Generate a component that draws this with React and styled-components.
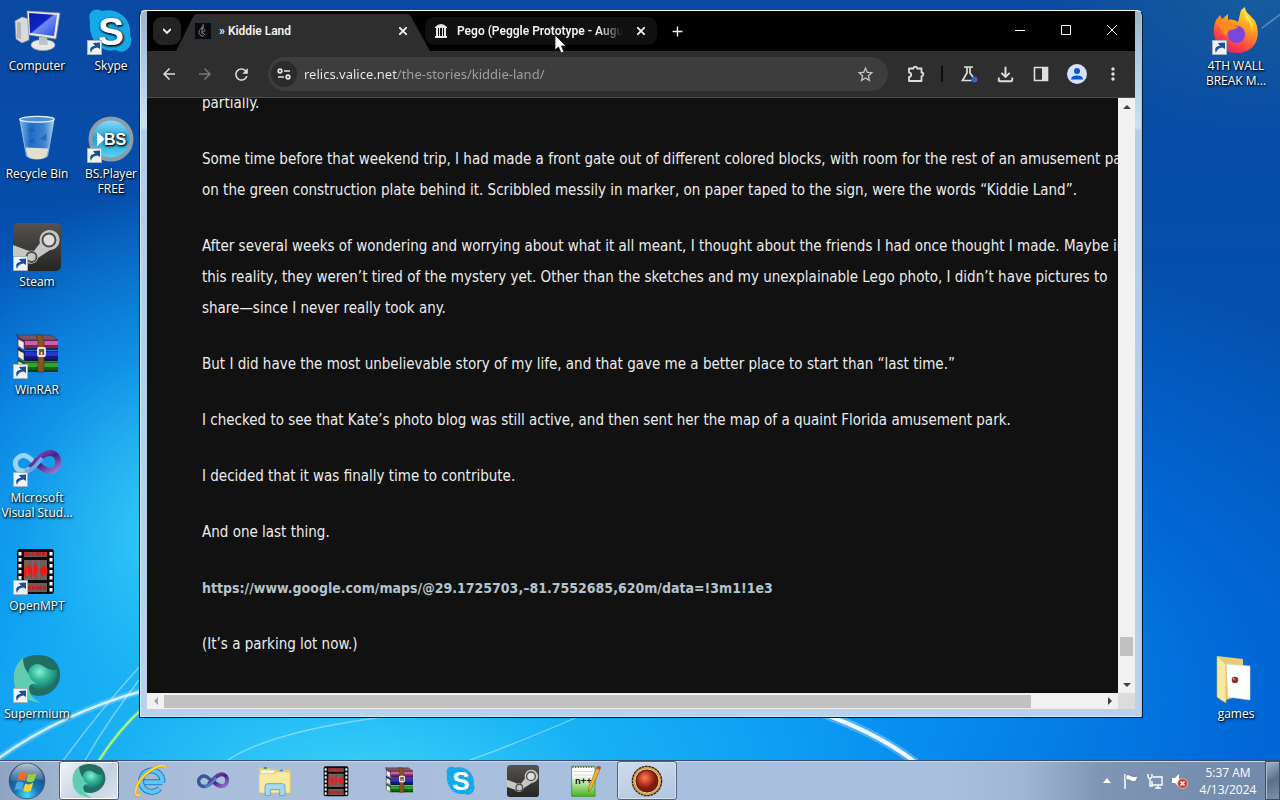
import React from 'react';
import styled, { createGlobalStyle, css } from 'styled-components';
import {
  MdArrowBack, MdArrowForward, MdRefresh, MdStarBorder,
  MdOutlineFileDownload, MdMoreVert, MdAdd,
} from 'react-icons/md';

const Global = createGlobalStyle`
  *, *::before, *::after { box-sizing: border-box; }
  body { margin: 0; overflow: hidden; }
  button { border: 0; padding: 0; background: none; color: inherit; font: inherit; }
`;

const uiFont = '"Open Sans", "Noto Sans", sans-serif';

/* ---------- desktop ---------- */

const Screen = styled.div`
  display: flex;
  flex-direction: column;
  height: 100vh;
  font-family: ${uiFont};
  font-size: 12px;
  background: #0a5fc4;
`;

const Desktop = styled.main`
  position: relative;
  flex: 1;
  min-height: 0;
  background:
    radial-gradient(ellipse 44% 34% at 28% 104%, rgba(64, 214, 248, 0.95), rgba(30, 184, 245, 0.7) 45%, transparent 100%),
    radial-gradient(ellipse 26% 46% at 16% 70%, rgba(70, 220, 248, 0.9), rgba(30, 185, 245, 0.5) 55%, transparent 100%),
    radial-gradient(ellipse 90% 70% at 36% 92%, #08a4f6 0%, #078df0 40%, rgba(0, 110, 226, 0.7) 70%, transparent 100%),
    radial-gradient(ellipse 18% 18% at 98% 0%, rgba(30, 104, 150, 0.6), transparent 100%),
    linear-gradient(180deg, #0a49a4 0%, #0450ad 40%, #0456ba 100%);
`;

const Wallpaper = styled.svg`
  position: absolute;
  inset: 0;
  width: 100%;
  height: 100%;
`;

const IconGrid = styled.div`
  position: relative;
  display: grid;
  grid-template-columns: 74px 74px 1fr 74px;
  grid-template-rows: repeat(7, 108px);
  padding-right: 7px;
`;

const Shortcut = styled.button`
  grid-column: ${(p) => p.$col};
  grid-row: ${(p) => p.$row};
  display: flex;
  flex-direction: column;
  align-items: center;
  padding-top: 7px;
  color: #fff;
  font-size: 12px;
  line-height: 15px;
  text-shadow: 1px 1px 2px #000, 0 1px 3px rgba(0, 0, 0, 0.8);
`;

const ShortcutArt = styled.span`
  position: relative;
  width: 48px;
  height: 48px;
  margin-bottom: 3px;
`;

const ArrowBadge = styled.svg`
  position: absolute;
  left: 0;
  bottom: 0;
  width: 15px;
  height: 15px;
`;

const Label = styled.span`
  white-space: pre;
  text-align: center;
`;

/* ---------- browser window ---------- */

const Window = styled.section`
  position: absolute;
  inset: 10px 137px 42px 139px;
  display: flex;
  flex-direction: column;
  padding: 0 7px 8px;
  border: 1px solid #0b1c2e;
  border-top-color: #fff;
  border-radius: 6px 6px 0 0;
  background: linear-gradient(180deg, #9fb4c6 0, #a9c6e4 40px, #c9e2f5 116px, #b3cdea 120px, #b9d1ea 100%);
  box-shadow: inset 1px 0 0 #d9ecf9, inset -1px 0 0 #6fdcf6, inset 0 -1px 0 #c8e8f8;
`;

const TitleBar = styled.header`
  flex: none;
  display: flex;
  align-items: center;
  height: 40px;
  padding-left: 6px;
  background: #000;
  color: #f2f2f2;
`;

const TabSearch = styled.button`
  display: grid;
  place-items: center;
  width: 28px;
  height: 28px;
  border-radius: 9px;
  background: #232323;
`;

const TabList = styled.nav`
  display: flex;
  align-items: center;
  align-self: stretch;
  margin-left: -5px;
`;

const Tab = styled.div`
  display: flex;
  align-items: center;
  gap: 8px;
  font-family: Roboto, "Open Sans", sans-serif;
  font-weight: 600;
  font-size: 12px;
  line-height: 16px;
  ${(p) => (p.$active ? css`
    align-self: flex-end;
    width: 254px;
    height: 37px;
    padding: 0 17px 4px 19px;
    background: #2e2e2e;
    clip-path: polygon(0 100%, 18px 1px, 20px 0, 232px 0, 234px 1px, 100% 100%);
  ` : css`
    width: 232px;
    height: 28px;
    padding: 0 6px 0 8px;
    margin-left: -5px;
    border-radius: 9px;
    background: #101010;
  `)}
`;

const TabTitle = styled.span`
  flex: 1;
  min-width: 0;
  overflow: hidden;
  white-space: nowrap;
  ${(p) => p.$fade && css`mask-image: linear-gradient(90deg, #000 85%, transparent);`}
`;

const TabButton = styled.button`
  display: grid;
  place-items: center;
  flex: none;
  width: 20px;
  height: 20px;
`;

const NewTab = styled(TabButton)`
  margin-left: 10px;
`;

const WindowControls = styled.div`
  display: flex;
  margin-left: auto;
  align-self: stretch;
`;

const WindowControl = styled.button`
  display: grid;
  place-items: center;
  width: 46px;
  height: 38px;
`;

const Toolbar = styled.div`
  flex: none;
  display: flex;
  align-items: center;
  height: 47px;
  padding: 0 4px;
  border-bottom: 1px solid #4c4c4c;
  background: #2e2e2e;
  color: #dedede;
`;

const ToolButton = styled.button`
  display: grid;
  place-items: center;
  flex: none;
  width: 36px;
  height: 36px;
  color: ${(p) => (p.$dim ? '#777' : 'inherit')};
`;

const AddressBar = styled.div`
  flex: 1;
  display: flex;
  align-items: center;
  height: 34px;
  margin: 0 10px 0 9px;
  padding: 0 5px 0 3px;
  border-radius: 17px;
  background: #3d3d3d;
`;

const SiteInfo = styled.button`
  display: grid;
  place-items: center;
  width: 26px;
  height: 26px;
  border-radius: 50%;
  background: #2b2b2b;
`;

const UrlInput = styled.input`
  flex: 1;
  min-width: 0;
  height: 24px;
  margin-left: 7px;
  padding: 0;
  border: 0;
  outline: 0;
  font-family: "Noto Sans", "Open Sans", sans-serif;
  font-size: 13px;
  color: transparent;
  background: linear-gradient(90deg, #ececec 93px, #a2a2a2 93px);
  background-clip: text;
`;

const Divider = styled.span`
  flex: none;
  width: 2px;
  height: 16px;
  margin: 0 8px 0 7px;
  background: #0c0c0c;
`;

const Viewport = styled.div`
  flex: 1;
  min-height: 0;
  display: grid;
  grid-template: minmax(0, 1fr) 16px / minmax(0, 1fr) 17px;
  background: #dcdcdc;
`;

const Article = styled.article`
  overflow: hidden;
  padding-left: 55px;
  background: #111;
  color: #ececec;
  font-family: "DejaVu Sans Condensed", "Noto Sans", sans-serif;
  font-size: 15px;
  line-height: 31px;
  white-space: nowrap;
`;

const Story = styled.div`
  margin-top: -10px;
`;

const Paragraph = styled.p`
  margin: 0 0 25px;
`;

const StoryLink = styled.a`
  color: #b4c3cd;
  font-size: 14px;
  font-weight: 700;
  text-decoration: none;
`;

const Track = styled.div`
  display: flex;
  align-items: center;
  flex-direction: ${(p) => (p.$vertical ? 'column' : 'row')};
  background: #f1f1f1;
`;

const TrackArrow = styled.button`
  display: grid;
  place-items: center;
  flex: none;
  width: 17px;
  height: 17px;
`;

const Gap = styled.span`
  flex: ${(p) => p.$grow} 0 0;
`;

const Thumb = styled.span`
  background: #c1c1c1;
  ${(p) => (p.$vertical
    ? css`flex: none; width: 13px; height: 19px;`
    : css`flex: 867 0 0; height: 13px;`)}
`;

const Cursor = styled.svg`
  position: absolute;
  left: 554px;
  top: 34px;
`;

/* ---------- taskbar ---------- */

const Taskbar = styled.footer`
  position: relative;
  flex: none;
  display: flex;
  height: 40px;
  border-top: 1px solid #37506e;
  box-shadow: inset 0 1px 0 #c5d8ee;
  background: linear-gradient(90deg, #8fa4c2 0, #9fb4d0 60px, #a9bedb 200px, #a8bfe0 74%, #a0b6d4 80%, #7f95b4 86%, #7188aa 100%);
`;

const StartButton = styled.button`
  display: grid;
  place-items: center;
  width: 54px;
  margin-right: 4px;
`;

const TaskButton = styled.button`
  display: grid;
  place-items: center;
  width: 60px;
  height: 39px;
  margin: 0 1px;
  border-radius: 3px;
  ${(p) => p.$state === 'active' && css`
    border: 1px solid #4e6079;
    background: linear-gradient(135deg, #f1f5f9, #c2d0e0 60%, #dbe6f0);
    box-shadow: inset 0 0 0 1px #fff;
  `}
  ${(p) => p.$state === 'open' && css`
    border: 1px solid #50627c;
    background: linear-gradient(160deg, #cfdced, #b1c5e0);
    box-shadow: inset 0 0 0 1px #d5e2f2;
  `}
`;

const Tray = styled.div`
  display: flex;
  align-items: center;
  margin-left: auto;
  color: #fff;
`;

const TrayButton = styled.button`
  display: grid;
  place-items: center;
  width: 24px;
  height: 24px;
`;

const Clock = styled.time`
  width: 74px;
  text-align: center;
  font-size: 12px;
  line-height: 17px;
  white-space: pre;
`;

const ShowDesktop = styled.button`
  align-self: stretch;
  width: 15px;
  border: 1px solid #3d5068;
  box-shadow: inset 1px 1px 0 #a9bbd0;
  background: linear-gradient(150deg, #a2b4c8, #5b7088 50%, #7c91ab);
`;

/* ---------- artwork ---------- */

const Art = ({ size = 48, children }) => (
  <svg width={size} height={size} viewBox="0 0 48 48" aria-hidden="true">{children}</svg>
);

const Computer = ({ size }) => (
  <Art size={size}>
    <defs>
      <linearGradient id="pcScreen" x1="0" y1="0" x2="1" y2="1">
        <stop offset="0" stopColor="#0a1c9c" /><stop offset=".45" stopColor="#1022c4" />
        <stop offset=".5" stopColor="#6f8cf2" /><stop offset="1" stopColor="#2b4ae0" />
      </linearGradient>
    </defs>
    <path d="M2 14 9 10l7 2v21l-7 3-6-4z" fill="#d8dadd" stroke="#8d9299" strokeWidth=".6" />
    <path d="M5 15v16M7 15v17" stroke="#8d9299" />
    <ellipse cx="30" cy="38" rx="12" ry="5.500" fill="#e6e8ea" stroke="#9ba0a6" strokeWidth=".6" />
    <path d="M26 30h8l1 8h-9z" fill="#bfc4c9" />
    <path d="m14 4 33 2-4 26-27-4z" fill="#e9ebee" stroke="#858b93" strokeWidth=".7" />
    <path d="m16 6 28 2-3 21-24-3z" fill="url(#pcScreen)" />
  </Art>
);

const RecycleBin = ({ size }) => (
  <Art size={size}>
    <defs>
      <linearGradient id="bin" x1="0" x2="1">
        <stop offset="0" stopColor="#b9def6" stopOpacity=".75" /><stop offset=".3" stopColor="#2f83dc" stopOpacity=".6" />
        <stop offset=".7" stopColor="#5fa5ea" stopOpacity=".6" /><stop offset="1" stopColor="#e1f2fc" stopOpacity=".8" />
      </linearGradient>
    </defs>
    <path d="M6 4h36l-7 39c-5 4-17 4-22 0z" fill="url(#bin)" stroke="#a3cdec" strokeWidth=".8" />
    <path d="m12 34 24 1-2 8c-5 4-15 4-20 0z" fill="#e5dfd0" />
    <ellipse cx="24" cy="4.500" rx="18" ry="3" fill="#4d8fd2" stroke="#e4f1fb" strokeWidth="1.300" />
    <path d="m14 17 5-5 3 6zM15 28l5-4 2 6zM27 25l7-6v8z" fill="#145dba" opacity=".65" />
  </Art>
);

const Steam = ({ size }) => (
  <Art size={size}>
    <defs>
      <linearGradient id="steamBg" x1="0" y1="0" x2="0" y2="1">
        <stop offset="0" stopColor="#55524f" /><stop offset="1" stopColor="#262524" />
      </linearGradient>
    </defs>
    <rect width="48" height="48" rx="5" fill="url(#steamBg)" />
    <path d="M0 22 16 28a7 7 0 0 1 5 0l6-8a10 10 0 1 1 10 7l-12 8a7 7 0 0 1-13 2L0 33z" fill="#c6c6c6" />
    <circle cx="36" cy="17" r="6.500" fill="#ddd" stroke="#4c4b4a" strokeWidth="2" />
    <circle cx="18.500" cy="34" r="5" fill="#c6c6c6" stroke="#4c4b4a" strokeWidth="1.800" />
  </Art>
);

const WinRar = ({ size }) => (
  <Art size={size}>
    {[['#c463a8', '#7b2163', 8], ['#2934cf', '#131a78', 19], ['#2fa530', '#126316', 30]].map(([a, b, y]) => (
      <g key={y}>
        <path d={`M4 ${y - 3}l7 4h34v10H12l-6-4z`} fill={b} />
        <path d={`M5 ${y}l6 3v8l-6-4z`} fill="#f3efe7" stroke="#222" strokeWidth=".6" />
        <path d={`M12 ${y + 2}h33v4H12z`} fill={a} />
        <path d={`M13 ${y + 10}h32`} stroke="#101010" />
      </g>
    ))}
    <path d="M3 4h35l7 5H11z" fill="#7e5263" stroke="#342025" strokeWidth=".5" />
    <path d="M23 4h5l3 5v32h-6V9z" fill="#8a5425" stroke="#4a2b10" strokeWidth=".6" />
    <rect x="25" y="17" width="7" height="8" rx="1" fill="none" stroke="#eee" strokeWidth="1.800" />
    <path d="M28.500 21v4" stroke="#ddd" strokeWidth="1.500" />
  </Art>
);

const VisualStudio = ({ size, pale }) => (
  <Art size={size}>
    <defs>
      <linearGradient id="vsR" x1="0" y1="0" x2="1" y2="1">
        <stop offset="0" stopColor="#8e58c4" /><stop offset=".5" stopColor="#4b1d86" /><stop offset="1" stopColor="#9a7fd6" />
      </linearGradient>
    </defs>
    <path d="M22 26C17 31 13 33 9 32 2 31 0 22 6 18c6-4 11 1 16 6" fill="none" stroke={pale ? '#9bd3f3' : '#35599b'} strokeWidth="5" />
    <path d="M17 29C25 23 28 14 37 14c11 0 11 18 0 18-7 0-10-6-17-10" fill="none" stroke="url(#vsR)" strokeWidth="6" />
    <path d="M12 33c8-2 12-8 17-14" fill="none" stroke={pale ? '#77a3e0' : '#4e80bf'} strokeWidth="4" />
  </Art>
);

const OpenMpt = ({ size }) => (
  <Art size={size}>
    <rect x="4" y="2" width="37" height="45" rx="3" fill="#0b0b0b" />
    {[5, 11, 17, 23, 29, 35, 41].map((y) => (
      <g key={y} fill="#fff"><rect x="5.500" y={y} width="3" height="3.500" /><rect x="36.500" y={y} width="3" height="3.500" /></g>
    ))}
    <path d="M11 5h23v5H11zM11 13h23v20H11zM11 36h23v9H11z" fill="#6d5d5d" />
    <path d="M11 7h23M12 41h21" stroke="#cc1818" strokeWidth="3.500" strokeDasharray="6 1 3 1" />
    <path d="m11 23 3-7 3 3 1 4 3-7 3 3 1 4 4-2 2-3 3 4v4l-4 4-2-4-4-2-2 5-3 2-2-6-3 6-3-2z" fill="#f21616" />
    <path d="M14 13v20M20 13v20M26 13v20" stroke="#8b7676" strokeWidth=".7" />
  </Art>
);

const Supermium = ({ size }) => (
  <Art size={size}>
    <defs>
      <radialGradient id="smBall" cx=".4" cy=".3" r=".75">
        <stop offset="0" stopColor="#8cf0d2" /><stop offset=".4" stopColor="#35bb9d" /><stop offset="1" stopColor="#11695f" />
      </radialGradient>
      <linearGradient id="smLeaf" x1="0" y1="0" x2="1" y2="1">
        <stop offset="0" stopColor="#67c6ae" /><stop offset="1" stopColor="#55d5b5" />
      </linearGradient>
    </defs>
    <path d="M10 4C18-2 38-2 44 9c7 12 2 26-12 31C18 44 6 34 6 20z" fill="#236e63" />
    <path d="M15 20c0-7 4-11 10-11 6 1 9 7 19 6 1 9-5 20-18 20-7-2-11-8-11-15z" fill="url(#smBall)" />
    <path d="M10 3c0 8 3 12 6 17 1 5 4 6 8 9-6-1-8 1-8 5 1 6 4 10 12 14C14 46 2 41 1 26 0 16 3 9 10 3z" fill="url(#smLeaf)" />
  </Art>
);

const Skype = ({ size }) => (
  <Art size={size}>
    <path d="M3 14C0 5 8 0 15 4c17-4 30 9 28 24 5 10-5 21-14 15C13 46 1 32 3 14z" fill="#16a9e8" />
    <text x="24" y="38" textAnchor="middle" fontFamily="Liberation Sans, sans-serif" fontWeight="700" fontSize="39" fill="#fff">S</text>
  </Art>
);

const BsPlayer = ({ size }) => (
  <Art size={size}>
    <defs>
      <linearGradient id="bs" x1="0" y1="0" x2="0" y2="1">
        <stop offset="0" stopColor="#92dfff" /><stop offset=".5" stopColor="#249fd3" /><stop offset="1" stopColor="#61d9f7" />
      </linearGradient>
    </defs>
    <circle cx="24" cy="24" r="20.500" fill="url(#bs)" stroke="#8c9ca8" strokeWidth="4" />
    <path d="m10 17 8 7-8 7z" fill="#fff" />
    <text x="28" y="30" textAnchor="middle" fontFamily="Liberation Sans, sans-serif" fontWeight="700" fontSize="16" fill="#fff">BS</text>
  </Art>
);

const Firefox = ({ size }) => (
  <Art size={size}>
    <defs>
      <linearGradient id="fox" x1=".8" y1="0" x2=".3" y2="1">
        <stop offset="0" stopColor="#fff04a" /><stop offset=".4" stopColor="#ff9a21" /><stop offset=".8" stopColor="#fb3a4a" /><stop offset="1" stopColor="#e31c7d" />
      </linearGradient>
    </defs>
    <path d="M4 13 8 8l2 4 6-5v6c4-1 7 0 10 2L29 3l4-3c0 6 6 8 10 14 6 12 3 32-19 32C4 46-2 27 4 13z" fill="url(#fox)" />
    <path d="M17 21c5-5 17-2 16 7-1 11-17 10-17 0z" fill="#7947dc" />
    <path d="M3 16c5-5 14-2 19 2l4 2c-2 3-7 2-10 4l-2 5c-5-3-2-8-11-13z" fill="#ff8a1d" />
    <path d="M33 4c-3 8 7 9 7 21 1-4 1-7-1-11z" fill="#fff04a" opacity=".8" />
  </Art>
);

const GamesFolder = ({ size }) => (
  <Art size={size}>
    <path d="m5 1 26 3v36L10 46 5 42z" fill="#e5cd74" />
    <path d="m14 9 24 2v34l-22-3z" fill="#fff" stroke="#d6d6d6" strokeWidth=".6" />
    <path d="m5 1 9 8v39l-9-6z" fill="#f8e9a2" stroke="#cbb14c" strokeWidth=".6" />
    <circle cx="23" cy="25" r="3.300" fill="#8b3428" /><circle cx="22" cy="24" r="1" fill="#da897a" />
  </Art>
);

const Explorer = ({ size }) => (
  <Art size={size}>
    <path d="M0 4h16l3 3h28v34H0z" fill="#e9cd71" />
    <path d="M3 8h20v5H3z" fill="#f6f6ee" /><path d="M7 3h5v3H7z" fill="#3ba25c" /><path d="M31 7h5v3h-5z" fill="#3e86d7" />
    <path d="M0 13h24l3-3h20v32H0z" fill="#f9e99f" stroke="#d7b95d" strokeWidth=".8" />
    <path d="M9 46V32q0-4 4-4h22q4 0 4 4v14h-8v-9H17v9z" fill="#a6daf4" stroke="#4a9dcc" strokeWidth="1.200" />
  </Art>
);

const InternetExplorer = ({ size }) => (
  <Art size={size}>
    <path d="M41 26H14M41 26a16 16 0 1 0-4 9" fill="none" stroke="#1d7fc2" strokeWidth="9" />
    <path d="M41 26H14M41 26a16 16 0 1 0-4 9" fill="none" stroke="#5fc6f5" strokeWidth="6" />
    <path d="M8 44C-4 51-1 29 16 14 29 2 44-3 46 4" fill="none" stroke="#d99a1b" strokeWidth="4.500" />
    <path d="M8 44C-4 51-1 29 16 14 29 2 44-3 46 4" fill="none" stroke="#ffd83c" strokeWidth="3" />
  </Art>
);

const NotepadPlus = ({ size }) => (
  <Art size={size}>
    <defs>
      <linearGradient id="npp" x1="0" y1="0" x2="0" y2="1"><stop offset=".3" stopColor="#fff" /><stop offset="1" stopColor="#48b516" /></linearGradient>
    </defs>
    <path d="M4 2h35v45H4z" fill="url(#npp)" stroke="#2d7d1e" />
    <path d="M5 3h33" stroke="#666" strokeWidth="3" strokeDasharray="2 2" />
    <path d="M7 10h30M7 15h30" stroke="#bbb" />
    <text x="9" y="29" fontFamily="Liberation Sans, sans-serif" fontWeight="700" fontSize="14" fill="#111">n++</text>
    <path d="m29 40 1-7L42 3l5 2-13 30z" fill="#f0b735" stroke="#916018" /><path d="m41 5 2-4 5 2-2 4z" fill="#b53a54" />
  </Art>
);

const Peggle = ({ size }) => (
  <Art size={size}>
    <defs>
      <radialGradient id="peg" cx=".4" cy=".35"><stop offset="0" stopColor="#f4845f" /><stop offset=".6" stopColor="#c43a20" /><stop offset="1" stopColor="#7c1b10" /></radialGradient>
    </defs>
    <circle cx="24" cy="24" r="22" fill="#d6a350" stroke="#38210d" strokeWidth="2" strokeDasharray="4 1" />
    <circle cx="24" cy="24" r="18" fill="#5d2014" stroke="#f0ce85" strokeWidth="1.500" />
    <circle cx="24" cy="24" r="15.500" fill="url(#peg)" />
  </Art>
);

const StartOrb = () => (
  <svg width="38" height="38" viewBox="0 0 48 48" aria-hidden="true">
    <defs>
      <radialGradient id="orb" cx=".5" cy=".9" r=".85"><stop offset="0" stopColor="#3fe0ff" /><stop offset=".4" stopColor="#1874b5" /><stop offset="1" stopColor="#173d68" /></radialGradient>
      <linearGradient id="orbGloss" x1="0" y1="0" x2="0" y2="1"><stop offset="0" stopColor="#fff" stopOpacity=".7" /><stop offset="1" stopColor="#fff" stopOpacity=".1" /></linearGradient>
    </defs>
    <circle cx="24" cy="24" r="22.500" fill="url(#orb)" stroke="#35516e" />
    <path d="M3 23a21 21 0 0 1 42 0c-12-4-28 5-42 0z" fill="url(#orbGloss)" />
    <path d="M14 14q5-3 10 0l-3 10q-5-3-9 0z" fill="#f26c2a" />
    <path d="M26 15q5 2 10-1l-3 10q-5 3-10 0z" fill="#9ccd38" />
    <path d="M11 26q5-3 9 0l-3 10q-4-3-9 0z" fill="#4aa9e8" />
    <path d="M22 27q5 3 10-1l-3 10q-5 3-10 0z" fill="#fcd22f" />
  </svg>
);

const Streaks = () => (
  <Wallpaper viewBox="0 0 1280 760" preserveAspectRatio="none" aria-hidden="true">
    <g fill="none" stroke="#fff" strokeLinecap="round">
      <path d="M-4 760Q60 714 142 691" strokeWidth="7" opacity=".2" />
      <path d="M-4 760Q60 714 142 691" strokeWidth="2.500" opacity=".75" />
      <path d="M62 762Q100 710 142 664M84 762Q108 720 142 676" strokeWidth="1.500" opacity=".4" />
      <path d="M98 762Q118 730 144 707" strokeWidth="4" stroke="#7ff58a" opacity=".35" />
      <path d="M98 762Q118 730 144 707" strokeWidth="1.700" stroke="#c8f56a" />
      <path d="M225 762Q270 730 400 715M470 760Q515 744 580 716" strokeWidth="1.300" opacity=".4" />
      <path d="M818 712Q876 732 915 762" strokeWidth="9" opacity=".25" />
      <path d="M818 712Q876 732 915 762" strokeWidth="4" opacity=".9" />
      <path d="M1262 28L1282 13" strokeWidth="1.500" opacity=".3" />
    </g>
  </Wallpaper>
);

const Triangle = ({ dir, dim }) => {
  const turn = { up: 0, right: 90, down: 180, left: 270 }[dir];
  return (
    <svg width="8" height="8" viewBox="0 0 8 8" aria-hidden="true">
      <path d="M0 6 4 2l4 4z" fill={dim ? '#a3a3a3' : '#404040'} transform={`rotate(${turn} 4 4)`} />
    </svg>
  );
};

const CloseGlyph = () => (
  <svg width="8" height="8" viewBox="0 0 8 8" aria-hidden="true">
    <path d="m0 0 8 8M8 0 0 8" stroke="#f2f2f2" strokeWidth="1.800" />
  </svg>
);

const shortcuts = [
  { col: 1, row: 1, label: 'Computer', Icon: Computer },
  { col: 1, row: 2, label: 'Recycle Bin', Icon: RecycleBin, size: 46 },
  { col: 1, row: 3, label: 'Steam', Icon: Steam, link: true },
  { col: 1, row: 4, label: 'WinRAR', Icon: WinRar, link: true },
  { col: 1, row: 5, label: 'Microsoft\nVisual Stud...', Icon: (p) => <VisualStudio {...p} pale />, link: true },
  { col: 1, row: 6, label: 'OpenMPT', Icon: OpenMpt, link: true },
  { col: 1, row: 7, label: 'Supermium', Icon: Supermium, link: true },
  { col: 2, row: 1, label: 'Skype', Icon: Skype, link: true },
  { col: 2, row: 2, label: 'BS.Player\nFREE', Icon: BsPlayer, link: true },
  { col: 4, row: 1, label: '4TH WALL\nBREAK M...', Icon: Firefox, link: true },
  { col: 4, row: 7, label: 'games', Icon: GamesFolder },
];

const tasks = [
  { name: 'Supermium', Icon: Supermium, state: 'active', size: 34 },
  { name: 'Internet Explorer', Icon: InternetExplorer },
  { name: 'Visual Studio', Icon: VisualStudio },
  { name: 'Windows Explorer', Icon: Explorer },
  { name: 'OpenMPT', Icon: OpenMpt },
  { name: 'WinRAR', Icon: WinRar },
  { name: 'Skype', Icon: Skype },
  { name: 'Steam', Icon: Steam },
  { name: 'Notepad++', Icon: NotepadPlus },
  { name: 'Peggle', Icon: Peggle, state: 'open' },
];

function Browser() {
  return (
    <Window aria-label="Kiddie Land">
      <TitleBar>
        <TabSearch aria-label="Search tabs">
          <svg width="8" height="6" viewBox="0 0 8 6"><path d="m0 1 4 4 4-4" fill="none" stroke="#f2f2f2" strokeWidth="1.800" /></svg>
        </TabSearch>
        <TabList>
          <Tab $active>
            <svg width="16" height="16" viewBox="0 0 16 16" aria-hidden="true">
              <path fill="#080a0d" d="M0 0h16v16H0z" />
              <path d="M8 1v4M6 5l3-2M8 5c-6 1-5 9 1 8M7 6v5M7 6c4-1 4 3 0 3l3 3" fill="none" stroke="#7c848c" />
            </svg>
            <TabTitle>» Kiddie Land</TabTitle>
            <TabButton aria-label="Close tab"><CloseGlyph /></TabButton>
          </Tab>
          <Tab>
            <svg width="16" height="16" viewBox="0 0 16 16" fill="#e4e4e4" aria-hidden="true">
              <path d="M2 4q6-6 12 0v1H2zM3 5h2v8H3zM6 5h1v8H6zM9 5h1v8H9zM11 5h2v8h-2zM2 13h12v2H2z" />
            </svg>
            <TabTitle $fade>Pego (Peggle Prototype - August 2005)</TabTitle>
            <TabButton aria-label="Close tab"><CloseGlyph /></TabButton>
          </Tab>
          <NewTab aria-label="New tab"><MdAdd size={17} /></NewTab>
        </TabList>
        <WindowControls>
          {[['Minimize', 'M0 5.500h10'], ['Maximize', 'M.500.500h9v9h-9z'], ['Close', 'M0 0l10 10M10 0 0 10']].map(([name, d]) => (
            <WindowControl key={name} aria-label={name}>
              <svg width="10" height="10" viewBox="0 0 10 10"><path d={d} fill="none" stroke="#fff" /></svg>
            </WindowControl>
          ))}
        </WindowControls>
      </TitleBar>

      <Toolbar>
        <ToolButton aria-label="Back"><MdArrowBack size={18} /></ToolButton>
        <ToolButton aria-label="Forward" $dim><MdArrowForward size={18} /></ToolButton>
        <ToolButton aria-label="Reload"><MdRefresh size={19} /></ToolButton>
        <AddressBar>
          <SiteInfo aria-label="Site information">
            <svg width="14" height="14" viewBox="0 0 14 14" fill="none" stroke="#e4e4e4" strokeWidth="1.700">
              <circle cx="3" cy="4" r="1.800" /><path d="M7 4h6M1 10h6" /><circle cx="11" cy="10" r="1.800" />
            </svg>
          </SiteInfo>
          <UrlInput aria-label="Address" defaultValue="relics.valice.net/the-stories/kiddie-land/" />
          <ToolButton aria-label="Bookmark this page"><MdStarBorder size={19} color="#c4c4c4" /></ToolButton>
        </AddressBar>
        <ToolButton aria-label="Extensions">
          <svg width="18" height="18" viewBox="0 0 18 18" fill="none" stroke="#dedede" strokeWidth="1.800" strokeLinejoin="round">
            <path d="M2 3.500h4.500a1.800 1.800 0 0 1 3.600 0H14.500V7.500a1.800 1.800 0 0 1 0 3.600V16H2v-4a2.200 2.200 0 0 0 0-4.400z" />
          </svg>
        </ToolButton>
        <Divider />
        <ToolButton aria-label="Experiments">
          <svg width="20" height="20" viewBox="0 0 20 20" fill="none" stroke="#dedede" strokeWidth="1.700">
            <path d="M5 3h9M8 3v6l-4.500 7.500h9M11 3v6l3 4" /><circle cx="15.500" cy="15.500" r="3" fill="#3465c4" stroke="none" />
          </svg>
        </ToolButton>
        <ToolButton aria-label="Downloads"><MdOutlineFileDownload size={23} /></ToolButton>
        <ToolButton aria-label="Side panel">
          <svg width="16" height="16" viewBox="0 0 16 16"><path d="M1.500 1.500h13v13h-13z" fill="none" stroke="#dedede" strokeWidth="1.600" /><path d="M9 1h6v14H9z" fill="#dedede" /></svg>
        </ToolButton>
        <ToolButton aria-label="Profile">
          <svg width="20" height="20" viewBox="0 0 20 20"><circle cx="10" cy="10" r="10" fill="#d6e2fb" /><circle cx="10" cy="7" r="3" fill="#0b57d0" /><path d="M4 15.500q0-4 6-4t6 4z" fill="#0b57d0" /></svg>
        </ToolButton>
        <ToolButton aria-label="Menu"><MdMoreVert size={20} /></ToolButton>
      </Toolbar>

      <Viewport>
        <Article>
          <Story>
            <Paragraph>partially.</Paragraph>
            <Paragraph>
              Some time before that weekend trip, I had made a front gate out of different colored blocks, with room for the rest of an amusement park<br />
              on the green construction plate behind it. Scribbled messily in marker, on paper taped to the sign, were the words “Kiddie Land”.
            </Paragraph>
            <Paragraph>
              After several weeks of wondering and worrying about what it all meant, I thought about the friends I had once thought I made. Maybe in<br />
              this reality, they weren’t tired of the mystery yet. Other than the sketches and my unexplainable Lego photo, I didn’t have pictures to<br />
              share—since I never really took any.
            </Paragraph>
            <Paragraph>But I did have the most unbelievable story of my life, and that gave me a better place to start than “last time.”</Paragraph>
            <Paragraph>I checked to see that Kate’s photo blog was still active, and then sent her the map of a quaint Florida amusement park.</Paragraph>
            <Paragraph>I decided that it was finally time to contribute.</Paragraph>
            <Paragraph>And one last thing.</Paragraph>
            <Paragraph>
              <StoryLink href="#map">https://www.google.com/maps/@29.1725703,–81.7552685,620m/data=!3m1!1e3</StoryLink>
            </Paragraph>
            <Paragraph>(It’s a parking lot now.)</Paragraph>
          </Story>
        </Article>
        <Track $vertical>
          <TrackArrow aria-label="Scroll up"><Triangle dir="up" /></TrackArrow>
          <Gap $grow={522} />
          <Thumb $vertical />
          <Gap $grow={20} />
          <TrackArrow aria-label="Scroll down"><Triangle dir="down" /></TrackArrow>
        </Track>
        <Track>
          <TrackArrow aria-label="Scroll left"><Triangle dir="left" dim /></TrackArrow>
          <Thumb />
          <Gap $grow={70} />
          <TrackArrow aria-label="Scroll right"><Triangle dir="right" /></TrackArrow>
        </Track>
      </Viewport>
    </Window>
  );
}

export default function App() {
  return (
    <Screen>
      <Global />
      <Desktop>
        <Streaks />
        <IconGrid>
          {shortcuts.map(({ col, row, label, Icon, link, size }) => (
            <Shortcut key={label} $col={col} $row={row}>
              <ShortcutArt>
                <Icon size={size} />
                {link && (
                  <ArrowBadge viewBox="0 0 15 15" aria-hidden="true">
                    <path d="M.500.500h14v14H.500z" fill="#eef3f8" stroke="#a7b3c0" />
                    <path d="M4 13C2 8 4 6 8 6L6 3l7-.500V9L10.500 7.500C7 8 5 9 4 13z" fill="#1c5095" />
                  </ArrowBadge>
                )}
              </ShortcutArt>
              <Label>{label}</Label>
            </Shortcut>
          ))}
        </IconGrid>
        <Browser />
        <Cursor width="13" height="20" viewBox="0 0 13 20" aria-hidden="true">
          <path d="M1 1v15l3.500-3L7 19l3-1-2.500-6H12z" fill="#fff" stroke="#111" strokeWidth=".8" />
        </Cursor>
      </Desktop>
      <Taskbar>
        <StartButton aria-label="Start"><StartOrb /></StartButton>
        {tasks.map(({ name, Icon, state, size = 32 }) => (
          <TaskButton key={name} aria-label={name} $state={state}><Icon size={size} /></TaskButton>
        ))}
        <Tray>
          <TrayButton aria-label="Show hidden icons"><svg width="8" height="5"><path d="M0 5 4 0l4 5z" fill="#fff" /></svg></TrayButton>
          <TrayButton aria-label="Action Center">
            <svg width="16" height="16" viewBox="0 0 16 16"><path d="M2 1v15" stroke="#fff" strokeWidth="1.500" /><path d="M3 2q3-1 5 1 3 1 7 0l-2 5q-3 1-5 0-2-2-5-1z" fill="#fff" stroke="#49617f" strokeWidth=".6" /></svg>
          </TrayButton>
          <TrayButton aria-label="Network">
            <svg width="16" height="16" viewBox="0 0 16 16" fill="none" stroke="#fff" strokeWidth="1.400"><path d="M6 4h9v8H5V8M8 15h6M11 12v3" /><path d="M1 1v3q2 3 4 0V1M3 5v8h3" /></svg>
          </TrayButton>
          <TrayButton aria-label="Volume muted">
            <svg width="17" height="16" viewBox="0 0 17 16"><path d="M1 5h3l4-4v13l-4-4H1z" fill="#fff" /><circle cx="11.500" cy="10.500" r="5" fill="#d43a2f" stroke="#fff" strokeWidth=".5" /><path d="m9.500 8.500 4 4m0-4-4 4" stroke="#fff" strokeWidth="1.500" /></svg>
          </TrayButton>
          <Clock>{'5:37 AM\n4/13/2024'}</Clock>
          <ShowDesktop aria-label="Show desktop" />
        </Tray>
      </Taskbar>
    </Screen>
  );
}
